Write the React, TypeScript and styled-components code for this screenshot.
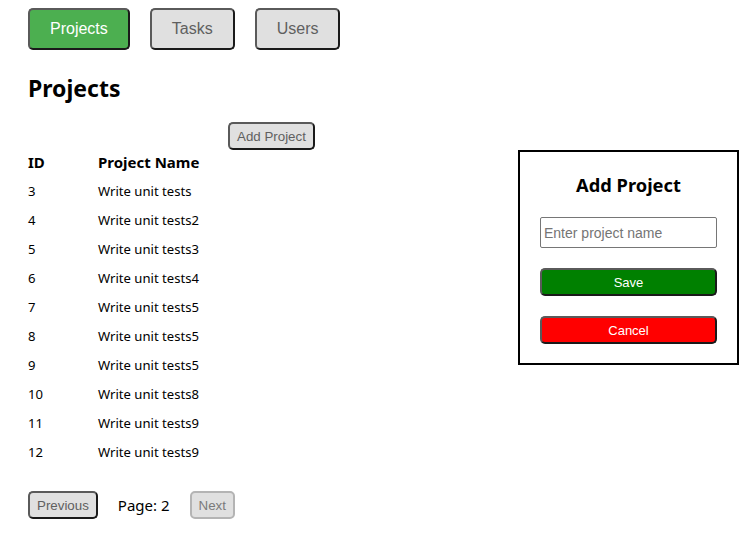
import React from "react";
import styled, { createGlobalStyle, css } from "styled-components";

const GlobalStyle = createGlobalStyle`
  body {
    margin: 8px;
    font-family: "Noto Sans", "Open Sans", sans-serif;
    color: #000;
    background: #fff;
  }
`;

const Page = styled.div`
  padding: 0 20px;
`;

const Nav = styled.nav`
  display: flex;
  gap: 20px;
`;

const btnBorder = css`
  border: 2px solid;
  border-color: #5a5a5a #1a1a1a #1a1a1a #5a5a5a;
  border-radius: 5px;
  font-family: "Liberation Sans", Arial, sans-serif;
  cursor: pointer;
`;

const NavButton = styled.button<{ $active?: boolean }>`
  ${btnBorder};
  height: 42px;
  padding: 0 20px;
  font-size: 16px;
  background: ${(p) => (p.$active ? "#4caf50" : "#e0e0e0")};
  color: ${(p) => (p.$active ? "#fff" : "#5f5f5f")};
`;

const Title = styled.h2`
  font-size: 23px;
  font-weight: 700;
  line-height: 32px;
  margin: 22px 0 0;
`;

const Toolbar = styled.div`
  display: flex;
  margin-top: 18px;
  padding-left: 200px;
`;

const SmallButton = styled.button<{ $disabled?: boolean }>`
  ${btnBorder};
  height: 28px;
  padding: 0 7px;
  font-size: 13.33px;
  background: #e0e0e0;
  color: #5f5f5f;
  ${(p) =>
    p.$disabled &&
    css`
      border-color: #b4b4b4;
      color: #7a7a7a;
      cursor: default;
    `}
`;

const Table = styled.table`
  border-collapse: collapse;
`;

const HeadCell = styled.th<{ $w?: number }>`
  height: 24px;
  padding: 0 0 2px;
  text-align: left;
  font-size: 15px;
  font-weight: 700;
  width: ${(p) => (p.$w ? `${p.$w}px` : "auto")};
`;

const Cell = styled.td`
  height: 29px;
  padding: 0;
  font-size: 13.1px;
`;

const Pager = styled.div`
  display: flex;
  align-items: center;
  gap: 20px;
  margin-top: 25px;
`;

const PageLabel = styled.span`
  font-size: 15px;
`;

const Modal = styled.div`
  position: absolute;
  top: 150px;
  right: 10px;
  width: 177px;
  padding: 20px 20px 19px;
  border: 2px solid #000;
  background: #fff;
  display: flex;
  flex-direction: column;
`;

const ModalTitle = styled.h3`
  margin: 0 0 19px;
  font-size: 18.3px;
  line-height: 26px;
  font-weight: 700;
  text-align: center;
`;

const Input = styled.input`
  box-sizing: border-box;
  width: 177px;
  height: 31px;
  padding: 0 3px;
  border: 1px solid #767676;
  border-radius: 2px;
  font-family: "Liberation Sans", Arial, sans-serif;
  font-size: 14px;
  &::placeholder {
    color: #757575;
  }
`;

const ActionButton = styled.button<{ $bg: string }>`
  ${btnBorder};
  height: 28px;
  width: 177px;
  margin-top: 20px;
  font-size: 13px;
  background: ${(p) => p.$bg};
  color: #fff;
`;

const rows = [
  [3, "Write unit tests"],
  [4, "Write unit tests2"],
  [5, "Write unit tests3"],
  [6, "Write unit tests4"],
  [7, "Write unit tests5"],
  [8, "Write unit tests5"],
  [9, "Write unit tests5"],
  [10, "Write unit tests8"],
  [11, "Write unit tests9"],
  [12, "Write unit tests9"],
];

export default function App() {
  return (
    <>
      <GlobalStyle />
      <Page>
        <Nav>
          <NavButton $active>Projects</NavButton>
          <NavButton>Tasks</NavButton>
          <NavButton>Users</NavButton>
        </Nav>
        <Title>Projects</Title>
        <Toolbar>
          <SmallButton>Add Project</SmallButton>
        </Toolbar>
        <Table>
          <thead>
            <tr>
              <HeadCell $w={70}>ID</HeadCell>
              <HeadCell>Project Name</HeadCell>
            </tr>
          </thead>
          <tbody>
            {rows.map(([id, name]) => (
              <tr key={id}>
                <Cell>{id}</Cell>
                <Cell>{name}</Cell>
              </tr>
            ))}
          </tbody>
        </Table>
        <Pager>
          <SmallButton>Previous</SmallButton>
          <PageLabel>Page: 2</PageLabel>
          <SmallButton $disabled disabled>
            Next
          </SmallButton>
        </Pager>
      </Page>
      <Modal>
        <ModalTitle>Add Project</ModalTitle>
        <Input placeholder="Enter project name" />
        <ActionButton $bg="#008000">Save</ActionButton>
        <ActionButton $bg="#ff0000">Cancel</ActionButton>
      </Modal>
    </>
  );
}
